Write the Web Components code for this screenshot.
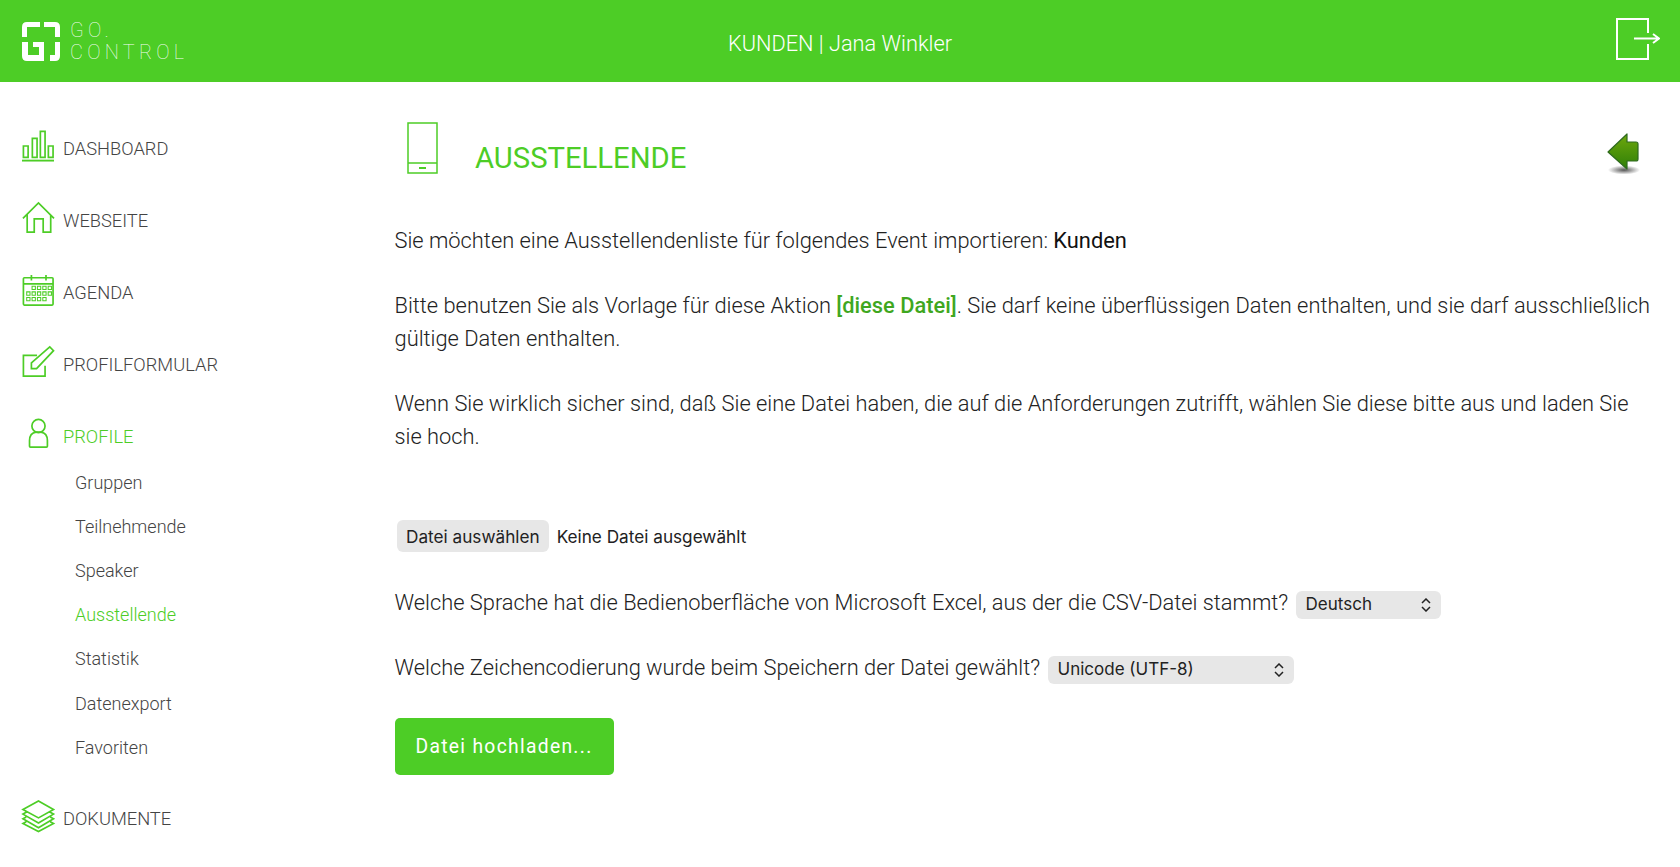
<!DOCTYPE html>
<html lang="de">
<head>
<meta charset="utf-8">
<title>Ausstellende</title>
<style>
  html, body { margin: 0; height: 100%; }
  body { font-family: Roboto, "Liberation Sans", sans-serif; background: #fff; overflow: hidden; }
</style>
</head>
<body>
<app-shell>
  <top-bar slot="top" title-text="KUNDEN | Jana Winkler"></top-bar>
  <side-nav slot="side"></side-nav>
  <import-page slot="main"></import-page>
</app-shell>

<script>
const GREEN = '#4dcd26';

const NAV_ICONS = {
  dashboard: `<path d="M1.500 17h5v12h-5zM11 9h5v20h-5zM19.500 1.500h5V29h-5zM28 17h5v12h-5z"/><path d="M0 32.500h34" stroke-width="2"/>`,
  home: `<path d="M1 17.500 17.500 1 34 17.500M5.500 13.500V32H13V18h9.500v14h8V13.500"/>`,
  calendar: `<rect x="1.500" y="4" width="31.500" height="29" rx="1"/><path d="M1.500 10.500H33M10 1v6M25.500 1v6"/><path stroke-width="1.100" d="M10.700 13h3.500v3.500h-3.500zM16.400 13h3.500v3.500h-3.500zM22.100 13h3.500v3.500h-3.500zM27.800 13h3.500v3.500h-3.500zM5 19h3.500v3.500H5zM10.700 19h3.500v3.500h-3.500zM16.400 19h3.500v3.500h-3.500zM22.100 19h3.500v3.500h-3.500zM27.800 19h3.500v3.500h-3.500zM5 25h3.500v3.500H5zM10.700 25h3.500v3.500h-3.500zM16.400 25h3.500v3.500h-3.500zM22.100 25h3.500v3.500h-3.500z"/>`,
  form: `<path d="M16 10H1.500v22h23V21"/><path d="M10 24v-6L29.500 1l4 4L15.500 24z"/>`,
  user: `<circle cx="17.500" cy="8.500" r="7"/><path d="M8 30v-6q0-8 7-9h5q7 1 7 9v6q0 1-1 1H9q-1 0-1-1z"/>`,
  layers: `<path d="M17.500 1 33.500 10 17.500 19 1 10zM4.500 13 1 15l16.500 9.500L33.500 15 30 13M4.500 18 1 20l16.500 9.500L33.500 20 30 18M4.500 23 1 25l16.500 8.500L33.500 25 30 23"/>`
};

class AppShell extends HTMLElement {
  constructor() {
    super();
    this.attachShadow({ mode: 'open' });
    this.shadowRoot.innerHTML = `
      <style>
        :host { display: flex; flex-direction: column; height: 100vh; overflow: hidden; }
        .body { display: flex; flex: 1; min-height: 0; }
      </style>
      <slot name="top"></slot>
      <div class="body">
        <slot name="side"></slot>
        <slot name="main"></slot>
      </div>
    `;
  }
}

class TopBar extends HTMLElement {
  constructor() {
    super();
    this.attachShadow({ mode: 'open' });
  }

  connectedCallback() {
    this.shadowRoot.innerHTML = `
      <style>
        :host {
          display: grid;
          grid-template-columns: 1fr auto 1fr;
          align-items: center;
          height: 82px;
          background: ${GREEN};
          color: #fff;
          flex: none;
        }
        .logo { display: flex; align-items: center; gap: 10px; padding-left: 22px; }
        .wordmark {
          font: 100 20px/22px Roboto, sans-serif;
          letter-spacing: 4.200px;
          color: rgba(255, 255, 255, .95);
        }
        .title { font: 300 21.750px Roboto, sans-serif; padding-top: 5px; }
        .exit { justify-self: end; padding-right: 20px; display: flex; margin-top: -4px; }
      </style>
      <div class="logo">
        <svg width="38" height="39" viewBox="0 0 38 39" fill="#fff">
          <path d="M0 15V5q0-5 5-5h13v5H5v10zM22 0h11q5 0 5 5v10h-5V5H22zM0 20h6v13h11v-8h-6v-5h11v19H5q-5 0-5-5zM33 20h5v14q0 5-5 5h-5v-6h5z"/>
        </svg>
        <div class="wordmark"><div>GO.</div><div>CONTROL</div></div>
      </div>
      <div class="title">${this.getAttribute('title-text')}</div>
      <div class="exit">
        <svg width="44" height="42" viewBox="0 0 44 42" fill="none" stroke="#fff" stroke-width="2">
          <path d="M32 15V1H1v40h31V26"/>
          <path d="M18 20.500h24M37 16l6 4.500-6 4.500"/>
        </svg>
      </div>
    `;
  }
}

class NavItem extends HTMLElement {
  constructor() {
    super();
    this.attachShadow({ mode: 'open' });
  }

  connectedCallback() {
    const active = this.hasAttribute('active');
    this.shadowRoot.innerHTML = `
      <style>
        :host { display: flex; align-items: center; height: 72px; box-sizing: border-box; padding: 0 0 2px 22px; gap: 9px;
          color: ${active ? GREEN : '#444'}; font: 300 18.300px Roboto, sans-serif; }
        svg { flex: none; fill: none; stroke: ${GREEN}; stroke-width: 1.800; width: 32px; height: 32px; margin-bottom: 4px; overflow: visible; }
      </style>
      <svg viewBox="0 0 34 34">${NAV_ICONS[this.getAttribute('icon')]}</svg>
      <span><slot></slot></span>
    `;
  }
}

class SubItem extends HTMLElement {
  constructor() {
    super();
    this.attachShadow({ mode: 'open' });
  }

  connectedCallback() {
    this.shadowRoot.innerHTML = `
      <style>
        :host { display: flex; align-items: center; height: 44.200px; padding-left: 75px;
          color: ${this.hasAttribute('active') ? GREEN : '#444'}; font: 300 18px Roboto, sans-serif; }
      </style>
      <slot></slot>
    `;
  }
}

class SideNav extends HTMLElement {
  constructor() {
    super();
    this.attachShadow({ mode: 'open' });
    this.shadowRoot.innerHTML = `
      <style>
        :host { display: block; width: 394.500px; flex: none; padding-top: 31px; box-sizing: border-box; }
        .subs { margin-top: -13px; margin-bottom: 14px; }
      </style>
      <nav-item icon="dashboard">DASHBOARD</nav-item>
      <nav-item icon="home">WEBSEITE</nav-item>
      <nav-item icon="calendar">AGENDA</nav-item>
      <nav-item icon="form">PROFILFORMULAR</nav-item>
      <nav-item icon="user" active>PROFILE</nav-item>
      <div class="subs">
        <sub-item>Gruppen</sub-item>
        <sub-item>Teilnehmende</sub-item>
        <sub-item>Speaker</sub-item>
        <sub-item active>Ausstellende</sub-item>
        <sub-item>Statistik</sub-item>
        <sub-item>Datenexport</sub-item>
        <sub-item>Favoriten</sub-item>
      </div>
      <nav-item icon="layers">DOKUMENTE</nav-item>
    `;
  }
}

class FormSelect extends HTMLElement {
  constructor() {
    super();
    this.attachShadow({ mode: 'open' });
  }

  connectedCallback() {
    this.shadowRoot.innerHTML = `
      <style>
        :host { display: inline-block; position: relative; vertical-align: middle; margin-top: 2px; width: ${this.getAttribute('width')}px; height: 28px; }
        select {
          display: block; appearance: none; border: 0; background: #e7e7e7; border-radius: 6px;
          width: 100%; height: 100%; padding: 0 0 2px 10px; margin: 0;
          font: 400 17px Inter, sans-serif; color: #222;
        }
        svg { position: absolute; right: 9px; top: 7px; fill: none; stroke: #222; stroke-width: 1.500; }
      </style>
      <select><option>${this.getAttribute('value')}</option></select>
      <svg width="12" height="14" viewBox="0 0 12 14"><path d="M2 5l4-4 4 4M2 9l4 4 4-4"/></svg>
    `;
  }
}

class ImportPage extends HTMLElement {
  constructor() {
    super();
    this.attachShadow({ mode: 'open' });
    this.shadowRoot.innerHTML = `
      <style>
        :host { display: block; flex: 1; min-width: 0; padding: 37px 20px 0 0; font: 300 21.850px/32.500px Roboto, sans-serif; color: #222; }
        .head { display: flex; align-items: flex-start; height: 68px; }
        .phone { margin: 3px 0 0 12.500px; flex: none; }
        h1 { margin: 21px 0 0 37px; font: 400 29.250px/36px Roboto, sans-serif; color: ${GREEN}; flex: 1; }
        .back { flex: none; margin: 13px 18px 0 0; }
        p { margin: 0; }
        .intro { margin-top: 37.500px; }
        .gap { margin-top: 33px; }
        b { font-weight: 400; color: #111; }
        a { color: #3fa71f; font-weight: 500; text-decoration: none; }
        .file { display: flex; align-items: center; gap: 8px; margin: 67px 0 0 2.500px; font: 400 17.200px Inter, sans-serif; color: #222; }
        .file button { border: 0; background: #e7e7e7; border-radius: 6px; height: 32px; padding: 0 9px; font: inherit; color: inherit; }
        .row { margin-top: 35px; }
        .row + .row { margin-top: 32px; }
        .row form-select { margin-left: 2px; }
        .upload {
          display: block; margin-top: 34px; height: 57px; width: 219px; border: 0; border-radius: 5px;
          background: ${GREEN}; color: #fff; font: 400 19.300px Roboto, sans-serif; letter-spacing: 1.300px;
        }
      </style>
      <div class="head">
        <svg class="phone" width="31" height="52" viewBox="0 0 31 52" fill="none" stroke="${GREEN}" stroke-width="1.500">
          <rect x="1" y="1" width="29" height="50"/>
          <path d="M1 41h29"/>
          <path d="M12 46h7" stroke-width="2"/>
        </svg>
        <h1>AUSSTELLENDE</h1>
        <svg class="back" width="36" height="44" viewBox="0 0 36 44">
          <defs>
            <linearGradient id="arrow" x1="0" y1="0" x2="0" y2="1">
              <stop offset="0" stop-color="#6ea80c"/>
              <stop offset="1" stop-color="#2f7f08"/>
            </linearGradient>
            <radialGradient id="shadow">
              <stop offset="0" stop-color="#555"/>
              <stop offset="1" stop-color="#555" stop-opacity="0"/>
            </radialGradient>
          </defs>
          <ellipse cx="18" cy="38" rx="16" ry="4.500" fill="url(#shadow)"/>
          <path d="M2 20 21 2v8h9q2 0 2 2v15q0 2-2 2h-9v8z" fill="url(#arrow)" stroke="#2e6a1e" stroke-width="1.200" stroke-linejoin="round"/>
        </svg>
      </div>
      <p class="intro">Sie möchten eine Ausstellendenliste für folgendes Event importieren: <b>Kunden</b></p>
      <p class="gap">Bitte benutzen Sie als Vorlage für diese Aktion <a href="#">[diese Datei]</a>. Sie darf keine überflüssigen Daten enthalten, und sie darf ausschließlich gültige Daten enthalten.</p>
      <p class="gap">Wenn Sie wirklich sicher sind, daß Sie eine Datei haben, die auf die Anforderungen zutrifft, wählen Sie diese bitte aus und laden Sie sie hoch.</p>
      <div class="file"><button type="button">Datei auswählen</button><span>Keine Datei ausgewählt</span></div>
      <p class="row">Welche Sprache hat die Bedienoberfläche von Microsoft Excel, aus der die CSV-Datei stammt? <form-select value="Deutsch" width="145"></form-select></p>
      <p class="row">Welche Zeichencodierung wurde beim Speichern der Datei gewählt? <form-select value="Unicode (UTF-8)" width="246"></form-select></p>
      <button class="upload" type="button">Datei hochladen...</button>
    `;
  }
}

customElements.define('app-shell', AppShell);
customElements.define('top-bar', TopBar);
customElements.define('nav-item', NavItem);
customElements.define('sub-item', SubItem);
customElements.define('side-nav', SideNav);
customElements.define('form-select', FormSelect);
customElements.define('import-page', ImportPage);
</script>
</body>
</html>
